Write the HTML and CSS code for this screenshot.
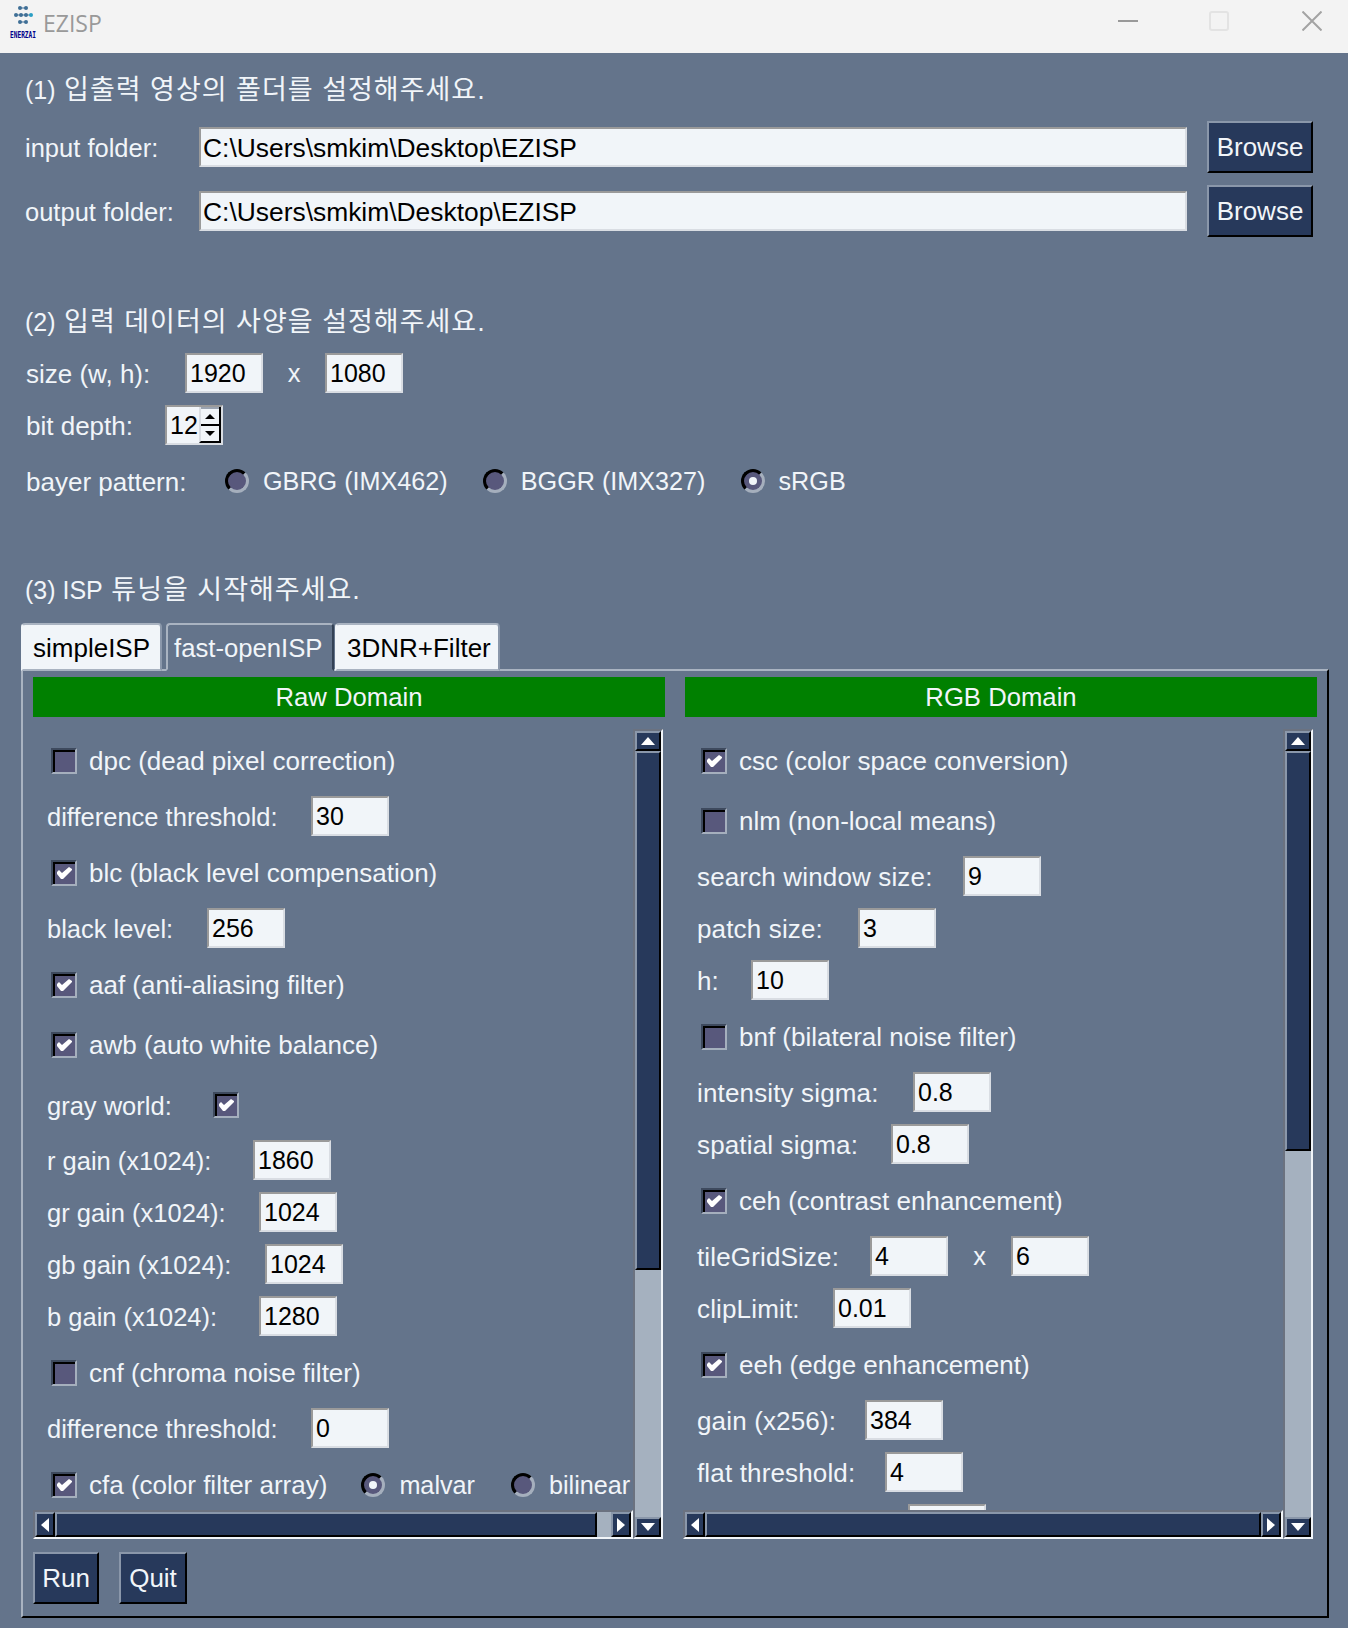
FILE: index.html
```html
<!DOCTYPE html>
<html lang="ko">
  <head>
    <meta charset="UTF-8" />
    <title>EZISP</title>
    <link rel="stylesheet" href="styles.css">
  </head>
  <body>
    <svg class="defs" width="0" height="0">
      <symbol id="tick" viewBox="0 0 15 12">
        <path d="M0 5L2 3L5 6L12 0L15 2V3L6 12H4L0 7Z" fill="#fff"/>
      </symbol>
    </svg>

    <header class="titlebar">
      <svg class="logo" width="30" height="40" viewBox="0 0 30 40">
        <g fill="#3f6f96">
          <circle cx="12" cy="4" r="2"/>
          <circle cx="18" cy="4" r="2"/>
          <circle cx="12" cy="18" r="2"/>
          <circle cx="18" cy="18" r="2"/>
          <path d="M12 3.500h6v1h-6zM12 17.500h6v1h-6zM8 10.500h15v1h-15z"/>
          <circle cx="8" cy="11" r="2"/>
          <circle cx="13" cy="11" r="2"/>
          <circle cx="18" cy="11" r="2"/>
        </g>
        <circle cx="23" cy="11" r="2" fill="#2a9fc4"/>
        <text class="logo-text" x="2" y="34" textLength="26" lengthAdjust="spacingAndGlyphs">ENERZAI</text>
      </svg>
      <span class="title">EZISP</span>
      <div class="win-buttons">
        <svg class="win-min" width="20" height="20" viewBox="0 0 20 20"><path d="M0 9h20v2h-20z" fill="#999"/></svg>
        <svg width="20" height="20" viewBox="0 0 20 20"><rect x="1" y="1" width="18" height="18" rx="2" fill="none" stroke="#e3e3e3" stroke-width="2"/></svg>
        <svg width="20" height="20" viewBox="0 0 20 20"><path d="M0.5 0.5l19 19M19.5 0.5l-19 19" fill="none" stroke="#a3a3a3" stroke-width="2"/></svg>
      </div>
    </header>

    <main class="content">
      <h2 class="step"><span class="step-num">(1)</span> 입출력 영상의 폴더를 설정해주세요.</h2>
      <div class="folder-row">
        <span class="folder-label">input folder:</span>
        <div class="entry folder-entry">C:\Users\smkim\Desktop\EZISP</div>
        <button class="btn">Browse</button>
      </div>
      <div class="folder-row">
        <span class="folder-label">output folder:</span>
        <div class="entry folder-entry">C:\Users\smkim\Desktop\EZISP</div>
        <button class="btn">Browse</button>
      </div>

      <h2 class="step step-2"><span class="step-num">(2)</span> 입력 데이터의 사양을 설정해주세요.</h2>
      <div class="spec-row size-row">
        <span class="lb lb-size">size (w, h):</span>
        <div class="entry">1920</div>
        <span class="times">x</span>
        <div class="entry">1080</div>
      </div>
      <div class="spec-row depth-row">
        <span class="lb lb-depth">bit depth:</span>
        <div class="spin">
          <span class="spin-val">12</span>
          <div class="spin-btns">
            <span class="spin-btn"><i class="arrow up small"></i></span>
            <span class="spin-btn"><i class="arrow down small"></i></span>
          </div>
        </div>
      </div>
      <div class="spec-row bayer-row">
        <span class="lb lb-bayer">bayer pattern:</span>
        <span class="radio"></span><span class="radio-text">GBRG (IMX462)</span>
        <span class="radio"></span><span class="radio-text">BGGR (IMX327)</span>
        <span class="radio on"></span><span class="radio-text">sRGB</span>
      </div>

      <h2 class="step step-3"><span class="step-num">(3) ISP</span> 튜닝을 시작해주세요.</h2>
      <div class="tabs">
        <div class="tab tab-a">simpleISP</div>
        <div class="tab tab-b active">fast-openISP</div>
        <div class="tab tab-c">3DNR+Filter</div>
      </div>

      <section class="panel">
        <div class="columns">
          <div class="domain">Raw Domain</div>
          <div class="domain">RGB Domain</div>

          <div class="pane">
            <div class="view">
              <div class="row check-row"><span class="check"></span>dpc (dead pixel correction)</div>
              <div class="row"><span class="lb w264">difference threshold:</span><div class="entry">30</div></div>
              <div class="row check-row"><span class="check on"><svg><use href="#tick"/></svg></span>blc (black level compensation)</div>
              <div class="row"><span class="lb w160">black level:</span><div class="entry">256</div></div>
              <div class="row check-row"><span class="check on"><svg><use href="#tick"/></svg></span>aaf (anti-aliasing filter)</div>
              <div class="row check-row"><span class="check on"><svg><use href="#tick"/></svg></span>awb (auto white balance)</div>
              <div class="row check-row"><span class="lb w166">gray world:</span><span class="check on"><svg><use href="#tick"/></svg></span></div>
              <div class="row"><span class="lb w206">r gain (x1024):</span><div class="entry">1860</div></div>
              <div class="row"><span class="lb w212">gr gain (x1024):</span><div class="entry">1024</div></div>
              <div class="row"><span class="lb w218">gb gain (x1024):</span><div class="entry">1024</div></div>
              <div class="row"><span class="lb w212">b gain (x1024):</span><div class="entry">1280</div></div>
              <div class="row check-row"><span class="check"></span>cnf (chroma noise filter)</div>
              <div class="row"><span class="lb w264">difference threshold:</span><div class="entry">0</div></div>
              <div class="row check-row">
                <span class="check on"><svg><use href="#tick"/></svg></span><span class="cfa-text">cfa (color filter array)</span>
                <span class="radio on"></span><span class="cfa-opt">malvar</span>
                <span class="radio"></span><span class="cfa-last">bilinear</span>
              </div>
            </div>
            <div class="vbar">
              <span class="bar-btn vbtn"><i class="arrow up"></i></span>
              <span class="thumb thumb-raw"></span>
              <span class="trough"></span>
              <span class="bar-btn vbtn"><i class="arrow down"></i></span>
            </div>
            <div class="hbar">
              <span class="bar-btn hbtn"><i class="arrow left"></i></span>
              <span class="thumb hthumb"></span>
              <span class="trough htrough"></span>
              <span class="bar-btn hbtn"><i class="arrow right"></i></span>
            </div>
          </div>

          <div class="pane pane-rgb">
            <div class="view">
              <div class="row check-row"><span class="check on"><svg><use href="#tick"/></svg></span>csc (color space conversion)</div>
              <div class="row check-row"><span class="check"></span>nlm (non-local means)</div>
              <div class="row"><span class="lb w266">search window size:</span><div class="entry">9</div></div>
              <div class="row"><span class="lb w161">patch size:</span><div class="entry">3</div></div>
              <div class="row"><span class="lb w54">h:</span><div class="entry">10</div></div>
              <div class="row check-row"><span class="check"></span>bnf (bilateral noise filter)</div>
              <div class="row"><span class="lb w216">intensity sigma:</span><div class="entry">0.8</div></div>
              <div class="row"><span class="lb w194">spatial sigma:</span><div class="entry">0.8</div></div>
              <div class="row check-row"><span class="check on"><svg><use href="#tick"/></svg></span>ceh (contrast enhancement)</div>
              <div class="row"><span class="lb w173">tileGridSize:</span><div class="entry">4</div><span class="times tile-x">x</span><div class="entry">6</div></div>
              <div class="row"><span class="lb w136">clipLimit:</span><div class="entry">0.01</div></div>
              <div class="row check-row"><span class="check on"><svg><use href="#tick"/></svg></span>eeh (edge enhancement)</div>
              <div class="row"><span class="lb w168">gain (x256):</span><div class="entry">384</div></div>
              <div class="row"><span class="lb w188">flat threshold:</span><div class="entry">4</div></div>
              <div class="row"><span class="lb w211"></span><div class="entry"></div></div>
            </div>
            <div class="vbar">
              <span class="bar-btn vbtn"><i class="arrow up"></i></span>
              <span class="thumb thumb-rgb"></span>
              <span class="trough"></span>
              <span class="bar-btn vbtn"><i class="arrow down"></i></span>
            </div>
            <div class="hbar">
              <span class="bar-btn hbtn"><i class="arrow left"></i></span>
              <span class="thumb hthumb"></span>
              <span class="bar-btn hbtn"><i class="arrow right"></i></span>
            </div>
          </div>
        </div>

        <div class="actions">
          <button class="btn btn-run">Run</button>
          <button class="btn btn-quit">Quit</button>
        </div>
      </section>
    </main>
  </body>
</html>
```

FILE: styles.css
```css
* {
  box-sizing: border-box;
}

body {
  margin: 0;
  width: 1348px;
  height: 1628px;
  overflow: hidden;
  background-color: #64748b;
  color: #f1f5f9;
  font-family: "Liberation Sans", Arial, sans-serif;
  font-size: 26px;
}

.defs {
  position: absolute;
}

/* Barra de titulo */
.titlebar {
  display: flex;
  align-items: center;
  height: 53px;
  padding-left: 8px;
  background-color: #f3f3f3;
}

.logo {
  align-self: flex-start;
  margin-top: 4px;
}

.logo-text {
  font-family: "DejaVu Sans Mono", monospace;
  font-size: 8px;
  font-weight: bold;
  fill: #00008b;
}

.title {
  margin-top: -8px;
  margin-left: 5px;
  font-family: "Open Sans", sans-serif;
  font-size: 23px;
  color: #999;
}

.win-buttons {
  display: flex;
  gap: 73px;
  margin-left: auto;
  margin-right: 26px;
  margin-top: -11px;
}

.win-min {
  margin-right: -2px;
}

/* Contenido */
.content {
  padding: 18px 19px 0 21px;
}

.step {
  height: 36px;
  margin: 0;
  padding-left: 4px;
  padding-top: 1px;
  font-family: "Liberation Sans", "Noto Sans CJK KR", sans-serif;
  font-size: 27px;
  font-weight: normal;
  letter-spacing: 1px;
  line-height: 36px;
}

.step-num {
  font-size: 25px;
  letter-spacing: 0;
}

.step-2 {
  margin-top: 66px;
}

.step-3 {
  margin-top: 70px;
}

.folder-row {
  display: flex;
  align-items: center;
  gap: 20px;
  height: 52px;
  margin-top: 12px;
  padding: 0 16px 0 4px;
}

.step + .folder-row {
  margin-top: 14px;
}

.folder-label {
  width: 154px;
  padding-top: 2px;
  font-size: 25.500px;
}

.entry {
  width: 78px;
  height: 40px;
  padding-left: 3px;
  border: 2px solid;
  border-color: #9a9a9a #d9dde3 #d9dde3 #9a9a9a;
  background-color: #f1f5f9;
  color: #000;
  font-size: 25px;
  line-height: 37px;
  white-space: nowrap;
  overflow: hidden;
}

.folder-entry {
  flex: 1;
  padding-left: 2px;
  font-size: 26.400px;
  line-height: 38px;
}

.btn {
  width: 106px;
  height: 52px;
  padding: 1px 0 0;
  border: 2px solid;
  border-color: #8a97aa #000 #000 #8a97aa;
  background-color: #27395b;
  color: #f1f5f9;
  font-family: inherit;
  font-size: 26px;
}

.spec-row {
  display: flex;
  align-items: center;
  height: 40px;
  padding-left: 5px;
}

.size-row {
  margin-top: 14px;
}

.depth-row {
  margin-top: 12px;
}

.bayer-row {
  margin-top: 16px;
}

.spec-row .lb {
  font-size: 26px;
}

.lb-size {
  width: 159px;
}

.lb-depth {
  width: 139px;
}

.lb-bayer {
  width: 199px;
}

.times {
  width: 62px;
  font-size: 25.500px;
  text-align: center;
}

.tile-x {
  width: 63px;
}

.spin {
  display: flex;
  justify-content: space-between;
  width: 58px;
  height: 40px;
  padding: 0 0 0 3px;
  border: 2px solid;
  border-color: #9a9a9a #d9dde3 #d9dde3 #9a9a9a;
  background-color: #f1f5f9;
  color: #000;
  font-size: 25px;
  line-height: 37px;
}

.spin-btns {
  display: flex;
  flex-direction: column;
  width: 22px;
  border-left: 2px solid #d9dde3;
  border-right: 2px solid #000;
  border-bottom: 2px solid #000;
}

.spin-btn {
  flex: 1;
  display: flex;
  align-items: center;
  justify-content: center;
  border-top: 2px solid #9aa3b0;
}

.spin-btn + .spin-btn {
  border-top: 2px solid #000;
}

.radio {
  flex: none;
  position: relative;
  width: 24px;
  height: 24px;
  border: 3px solid;
  border-color: #000 #a5afbd #a5afbd #000;
  border-radius: 50%;
  background-color: #58587c;
}

.radio.on::after {
  content: "";
  position: absolute;
  left: 5px;
  top: 5px;
  width: 8px;
  height: 8px;
  border-radius: 50%;
  background-color: #f1f5f9;
}

.radio-text {
  margin-left: 14px;
  margin-right: 35px;
  padding-top: 1px;
  font-size: 25.200px;
}

/* Pestañas */
.tabs {
  display: flex;
  position: relative;
  z-index: 1;
  height: 48px;
  margin-top: 16px;
  margin-bottom: -2px;
}

.tab {
  height: 48px;
  padding: 0 0 0 10px;
  border: 2px solid;
  border-color: #a9b3c1 #8a97aa #a9b3c1 #f1f5f9;
  border-radius: 4px 4px 0 0;
  background-color: #f1f5f9;
  color: #000;
  line-height: 46px;
}

.tab-a {
  width: 141px;
}

.tab-b {
  width: 168px;
  margin-left: 4px;
  padding-left: 6px;
}

.tab-c {
  width: 165px;
  margin-left: 1px;
}

.tab.active {
  border-color: #a9b3c1 #334155 #64748b #a9b3c1;
  background-color: #64748b;
  color: #f1f5f9;
  font-size: 25.700px;
}

.panel {
  height: 949px;
  padding: 6px 10px 12px;
  border: 2px solid;
  border-color: #a9b3c1 #000 #000 #a9b3c1;
}

.columns {
  display: grid;
  grid-template-columns: 632px 632px;
  gap: 12px 20px;
}

.domain {
  height: 40px;
  background-color: #008000;
  color: #f1f5f9;
  font-size: 25.700px;
  line-height: 41px;
  text-align: center;
}

/* Paneles con scroll */
.pane {
  display: grid;
  grid-template-columns: 600px 30px;
  grid-template-rows: 781px 29px;
}

.pane-rgb {
  margin-left: -2px;
}

.pane-rgb .lb {
  font-size: 26px;
  letter-spacing: 0.15px;
}

.view {
  overflow: hidden;
  padding-top: 5px;
}

.row {
  display: flex;
  align-items: center;
  height: 44px;
  margin-bottom: 8px;
  padding-left: 14px;
  white-space: nowrap;
}

.check-row {
  height: 52px;
  padding-top: 2px;
  padding-left: 18px;
}

.check-row .lb {
  margin-left: -4px;
}

.check {
  flex: none;
  display: flex;
  align-items: center;
  justify-content: center;
  width: 26px;
  height: 26px;
  margin-right: 12px;
  border: 2px solid;
  border-color: #3e4a5e #a5afbd #a5afbd #3e4a5e;
  background-color: #58587c;
  box-shadow: inset 2px 2px 0 #000;
}

.check svg {
  width: 15px;
  height: 12px;
  margin-left: 1px;
}

.cfa-text {
  margin-right: 34px;
}

.row .radio + span {
  margin-left: 14px;
  font-size: 25.200px;
}

.row .radio + .cfa-opt {
  margin-right: 36px;
}

.lb {
  flex: none;
  padding-top: 2px;
  font-size: 25.500px;
}

.w54 { width: 54px; }
.w136 { width: 136px; }
.w160 { width: 160px; }
.w161 { width: 161px; }
.w166 { width: 166px; }
.w168 { width: 168px; }
.w173 { width: 173px; }
.w188 { width: 188px; }
.w194 { width: 194px; }
.w206 { width: 206px; }
.w211 { width: 211px; }
.w212 { width: 212px; }
.w216 { width: 216px; }
.w218 { width: 218px; }
.w264 { width: 264px; }
.w266 { width: 266px; }

.vbar,
.hbar {
  display: flex;
  border: 2px solid;
  border-color: #6b7280 #f1f5f9 #f1f5f9 #6b7280;
  background-color: #a5b1bf;
}

.vbar {
  grid-column: 2;
  grid-row: 1 / 3;
  flex-direction: column;
}

.hbar {
  grid-column: 1;
  grid-row: 2;
}

.bar-btn,
.thumb {
  flex: none;
  display: flex;
  align-items: center;
  justify-content: center;
  border: 2px solid;
  border-color: #8a97aa #000 #000 #8a97aa;
  background-color: #27395b;
}

.vbtn {
  height: 20px;
}

.hbtn {
  width: 20px;
}

.thumb-raw {
  height: 519px;
}

.thumb-rgb {
  height: 400px;
}

.hthumb {
  flex: 1;
}

.trough {
  flex: 1;
}

.htrough {
  flex: none;
  width: 14px;
}

/* Flechas */
.arrow {
  display: block;
  width: 0;
  height: 0;
  border-style: solid;
  border-color: transparent;
}

.arrow.up {
  border-width: 0 7px 8px;
  border-bottom-color: #fff;
}

.arrow.down {
  border-width: 8px 7px 0;
  border-top-color: #fff;
}

.arrow.left {
  border-width: 7px 8px 7px 0;
  border-right-color: #fff;
}

.arrow.right {
  border-width: 7px 0 7px 8px;
  border-left-color: #fff;
}

.arrow.up.small {
  border-width: 0 5px 5px;
  border-bottom-color: #000;
}

.arrow.down.small {
  border-width: 5px 5px 0;
  border-top-color: #000;
}

.actions {
  display: flex;
  gap: 20px;
  margin-top: 13px;
}

.btn-run {
  width: 66px;
}

.btn-quit {
  width: 68px;
}
```
